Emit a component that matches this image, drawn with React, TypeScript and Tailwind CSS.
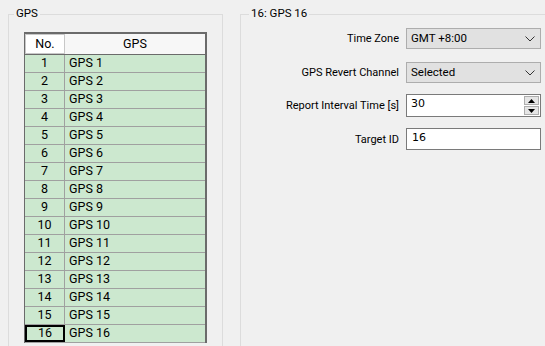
import React from 'react';

const rows = Array.from({ length: 16 }, (_, i) => ({ no: i + 1, name: `GPS ${i + 1}` }));

const Chevron: React.FC = () => (
  <svg width="10" height="6" viewBox="0 0 10 6" className="shrink-0">
    <polyline points="0.5,0.5 5,5 9.5,0.5" fill="none" stroke="#333" strokeWidth="1" />
  </svg>
);

const Combo: React.FC<{ value: string }> = ({ value }) => (
  <div className="flex h-[21px] w-[135px] items-center justify-between border border-[#adadad] bg-[#e1e1e1] pl-[4px] pr-[5px] text-[11.5px]">
    <span>{value}</span>
    <Chevron />
  </div>
);

const SpinBox: React.FC<{ value: string }> = ({ value }) => (
  <div className="flex h-[23px] w-[135px] border border-[#7a7a7a] bg-white">
    <span className="flex-1 pl-[4px] pt-[3px] font-['DejaVu_Sans',sans-serif] text-[11px]">{value}</span>
    <div className="flex w-[17px] flex-col gap-px bg-white p-px">
      <div className="flex flex-1 items-center justify-center border border-[#adadad] bg-[#e5e5e5]">
        <svg width="7" height="4" viewBox="0 0 7 4"><polygon points="3.5,0 7,4 0,4" fill="#000" /></svg>
      </div>
      <div className="flex flex-1 items-center justify-center border border-[#adadad] bg-[#e5e5e5]">
        <svg width="7" height="4" viewBox="0 0 7 4"><polygon points="0,0 7,0 3.5,4" fill="#000" /></svg>
      </div>
    </div>
  </div>
);

const TextBox: React.FC<{ value: string }> = ({ value }) => (
  <div className="h-[22px] w-[135px] border border-[#7a7a7a] bg-white pl-[5px] pt-[3px] font-['DejaVu_Sans',sans-serif] text-[11px]">
    {value}
  </div>
);

export default function App() {
  return (
    <div className="relative flex h-[346px] w-[545px] overflow-hidden bg-[#f0f0f0] font-['Roboto',Arial,sans-serif] text-[12px] leading-none text-black">
      {/* splitter edge */}
      <div className="ml-[2px] h-full w-px bg-[#a0a0a0]" />
      <div className="h-full w-px bg-white" />

      {/* GPS group */}
      <div className="relative ml-[6px] mt-[14px] h-[400px] w-[215px] shrink-0 border border-[#dcdcdc] pl-[15px] pt-[17px]">
        <span className="absolute -top-[7px] left-[5px] bg-[#f0f0f0] px-[2px] text-[11.5px]">GPS</span>

        <div className="w-[183px] border-l border-r-2 border-t-2 border-[#6b6b6b] bg-white">
          <div className="flex h-[21px] border-b border-[#6b6b6b] text-[12.5px]">
            <div className="flex w-[40px] items-center justify-center border border-[#c8c8c8] bg-white">No.</div>
            <div className="flex flex-1 items-center justify-center bg-[#f7f7f7]">GPS</div>
          </div>
          {rows.map((r) => (
            <div key={r.no} className="flex h-[18px] border-b border-[#a0a0a0] bg-[#cce8cf] text-[12.5px]">
              {r.no === 16 ? (
                <div className="flex w-[40px] items-center justify-center border-2 border-black">{r.no}</div>
              ) : (
                <div className="flex w-[40px] items-center justify-center border-r border-[#a0a0a0]">{r.no}</div>
              )}
              <div className="flex flex-1 items-center pl-[4px]">{r.name}</div>
            </div>
          ))}
        </div>
      </div>

      {/* Detail group */}
      <div className="relative ml-[17px] mt-[14px] h-[400px] w-[330px] shrink-0 border border-[#dcdcdc] pt-[13px] text-[11px]">
        <span className="absolute -top-[7px] left-[8px] bg-[#f0f0f0] px-[2px] text-[11.5px]">16: GPS 16</span>

        <div className="grid grid-cols-[158px_135px] items-center gap-x-[7px]">
          <span className="text-right">Time Zone</span>
          <Combo value="GMT +8:00" />

          <span className="mt-[13px] text-right">GPS Revert Channel</span>
          <div className="mt-[13px]"><Combo value="Selected" /></div>

          <span className="mt-[11px] text-right">Report Interval Time [s]</span>
          <div className="mt-[11px]"><SpinBox value="30" /></div>

          <span className="mt-[11px] text-right">Target ID</span>
          <div className="mt-[11px]"><TextBox value="16" /></div>
        </div>
      </div>
    </div>
  );
}
